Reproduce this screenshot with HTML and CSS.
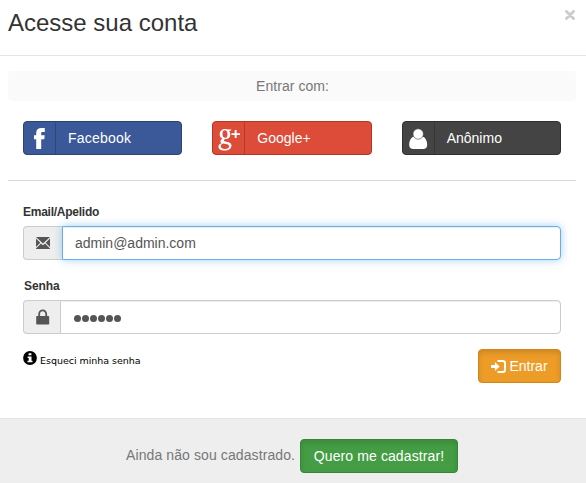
FILE: index.html
```
<!DOCTYPE html>
<html lang="pt-BR">
<head>
<meta charset="utf-8">
<title>Acesse sua conta</title>
<link rel="stylesheet" href="styles.css">
</head>
<body>
<main class="modal">
  <header class="modal-header">
    <h1>Acesse sua conta</h1>
    <button class="close" aria-label="Fechar"><svg width="10" height="10" viewBox="0 0 10 10"><path d="M1.500 1.500l7 7M8.500 1.500l-7 7" stroke="#ccc" stroke-width="2.900" stroke-linecap="round"/></svg></button>
  </header>
  <section class="modal-body">
    <p class="hint">Entrar com:</p>
    <div class="social">
      <button class="social-btn facebook">
        <span class="social-icon"><svg width="32" height="32" viewBox="0 0 32 32"><path fill="#fff" d="M20.800 6.100v4h-2.100c-1.200 0-1.500.5-1.500 1.400v1.700h3.500l-.4 4h-3.100V27h-5V17.200H10v-4h2.200v-2.400c0-3.100 2-4.800 5.200-4.800 1.400 0 2.900 0 3.400.1z"/></svg></span>
        <span class="social-text">Facebook</span>
      </button>
      <button class="social-btn google">
        <span class="social-icon"><svg width="32" height="32" viewBox="0 0 32 32"><path fill="#fff" fill-rule="evenodd" d="M12 7c1.300 0 2.100.3 3 .5h3.500L17.200 9h-1.400c1 .9 1.500 2 1.500 3.400 0 2.800-2.100 4.700-5.200 4.700-.8.500-1.200.9-1.200 1.400 0 .8.900 1 2.500 1.200 3.200.4 5.100 1.400 5.100 3.800 0 3-2.900 5-6.900 5-3.900 0-6.200-1.400-6.200-3.800 0-1.700 1.200-2.900 3.300-3.500-.9-.4-1.300-1-1.300-1.700 0-1 .8-1.900 2.100-2.700-1.800-.7-2.800-2.200-2.800-4.200C6.700 9.300 8.700 7 12 7zm-.3 1.300c-1.400 0-2.200 1.200-2.200 3.400 0 2.700 1 4.100 2.700 4.100 1.500 0 2.300-1.200 2.300-3.400 0-2.700-1-4.100-2.800-4.100zM10.200 21.600c-1.600.5-2.400 1.400-2.400 2.700 0 1.600 1.400 2.600 4.200 2.600 2.500 0 4-1 4-2.500 0-1.700-1.500-2.300-5.800-2.800z"/><path fill="#fff" d="M21.700 8h1.900v3.200H27v1.700h-3.400V16h-1.900v-3.100h-3.200v-1.700h3.200z"/></svg></span>
        <span class="social-text">Google+</span>
      </button>
      <button class="social-btn anonymous">
        <span class="social-icon"><svg width="32" height="32" viewBox="0 0 32 32" fill="#fff"><path d="M11 14.500c-3.100.8-4.800 4.200-4.800 8.500 0 2.600 1.600 4 4 4h10c2.400 0 4-1.400 4-4 0-4.300-1.700-7.700-4.800-8.500-1.100 1.600-2.500 2.300-4.200 2.300s-3.100-.7-4.200-2.300z"/><circle cx="15.200" cy="12" r="5.200" stroke="#444" stroke-width=".6"/></svg></span>
        <span class="social-text">Anônimo</span>
      </button>
    </div>
    <form class="login">
      <label for="email">Email/Apelido</label>
      <div class="input-group">
        <span class="addon mail"><svg width="14" height="12" viewBox="0 0 14 12" fill="#555"><path d="M0 0h14L7 6.500zM0 1.500L4.300 5.700 0 10zM14 1.500v8.500L9.700 5.700zM0 12v-.6l5-5 2 1.800 2-1.800 5 5v.6z"/></svg></span>
        <input id="email" class="focused" type="text" value="admin@admin.com">
      </div>
      <label for="senha" class="password-label">Senha</label>
      <div class="input-group">
        <span class="addon"><svg width="14" height="16" viewBox="0 0 14 16"><path d="M3.200 8V5a3.500 3.700 0 0 1 7 0v3" fill="none" stroke="#555" stroke-width="1.800"/><rect x=".2" y="7" width="13" height="8.500" rx=".8" fill="#555"/></svg></span>
        <div class="password" id="senha" role="textbox"><i></i><i></i><i></i><i></i><i></i><i></i></div>
      </div>
      <div class="actions">
        <a class="forgot"><svg width="14" height="14" viewBox="0 0 14 14"><circle cx="7" cy="7" r="6.900"/><path fill="#fff" d="M5.600 2.300h2.800v2H5.600zM4.600 5.500h3.900v4.300h1v1.400h-5V9.800h1.200V6.900H4.600z"/></svg><span>Esqueci minha senha</span></a>
        <button type="button" class="btn enter"><svg width="15" height="13" viewBox="0 0 15 13"><path fill="#fff" d="M0 5h3.900V2l4.700 4.500L3.900 11V8H0z"/><path fill="none" stroke="#fff" stroke-width="2" d="M6.500 1h5.300c1.300 0 2.200.8 2.200 2.200v6.600c0 1.400-.9 2.200-2.200 2.200H6.500"/></svg><span>Entrar</span></button>
      </div>
    </form>
  </section>
  <footer class="modal-footer">
    <span>Ainda não sou cadastrado.</span>
    <button class="btn signup">Quero me cadastrar!</button>
  </footer>
</main>
</body>
</html>
```
FILE: styles.css
```
* { box-sizing: border-box; }
body { margin: 0; background: #fff; color: #333; font: 14px/20px "Liberation Sans", Arial, sans-serif; overflow: hidden; }
button, input { font: inherit; }
button { margin: 0; padding: 0; border: 0; }
svg { display: block; flex: none; }
.modal { height: 483px; display: flex; flex-direction: column; }
.modal-header { height: 56px; flex: none; display: flex; justify-content: space-between; align-items: flex-start; padding: 9px 11px 0 8px; border-bottom: 1px solid #e5e5e5; }
h1 { margin: 0; font-size: 24px; line-height: 27px; font-weight: normal; }
.close { background: none; margin-top: 1px; }
.modal-body { height: 362px; flex: none; padding: 15px 10px 0 8px; }
.hint { margin: 0; height: 30px; line-height: 30px; border-radius: 4px; background: #fafafa; color: #777; text-align: center; letter-spacing: .04px; padding-left: 1px; }
.social { display: grid; grid-template-columns: repeat(3, 1fr); gap: 30px; padding: 20px 15px 25px; border-bottom: 1px solid #d9d9d9; }
.social-btn { display: flex; height: 34px; border: 1px solid; border-radius: 4px; overflow: hidden; color: #fff; text-align: left; }
.social-icon { width: 32px; height: 32px; border-right: 1px solid rgba(0,0,0,.2); }
.social-text { line-height: 32px; padding-left: 12px; }
.facebook { background: #3b5998; border-color: #2d4373; letter-spacing: .22px; }
.google { background: #dd4b39; border-color: #b63626; }
.anonymous { background: #444; border-color: #303030; }
.login { padding: 22px 15px 0; }
label { display: block; height: 18px; font-size: 12px; line-height: 18px; font-weight: bold; letter-spacing: -.25px; margin-bottom: 5px; }
.password-label { margin-top: 17px; padding-left: 1px; letter-spacing: -.1px; }
.input-group { display: flex; height: 34px; }
.addon { width: 38px; margin-right: -1px; display: flex; align-items: center; justify-content: center; border: 1px solid #ccc; border-right: 0; border-radius: 4px 0 0 4px; background: #eee; }
.mail { width: 39px; margin-right: 0; }
input, .password { flex: 1; min-width: 0; border: 1px solid #ccc; border-radius: 0 4px 4px 0; background: #fff; color: #555; padding: 0 12px; box-shadow: inset 0 1px 1px rgba(0,0,0,.075); }
.focused { outline: 0; border-color: #66afe9; box-shadow: inset 0 1px 1px rgba(0,0,0,.075), 0 0 8px rgba(102,175,233,.6); }
.password { display: flex; align-items: center; gap: 1px; padding-top: 3px; padding-left: 13px; }
.password i { width: 7px; height: 7px; border-radius: 50%; background: #555; }
.actions { display: flex; justify-content: space-between; margin-top: 15px; }
.forgot { display: flex; height: 21px; gap: 3px; color: #000; font: 9.500px/14px "DejaVu Sans", sans-serif; padding-top: 2px; letter-spacing: -.03px; }
.forgot span { margin-top: 3px; }
.btn { display: flex; align-items: center; justify-content: center; height: 34px; border: 1px solid; border-radius: 4px; color: #fff; box-shadow: inset 0 3px 5px rgba(0,0,0,.125); }
.enter { width: 83px; gap: 3px; background: #ed9c28; border-color: #d58512; }
.modal-footer { flex: 1; display: flex; align-items: flex-start; justify-content: center; gap: 4px; padding: 20px 2px 0 0; border-top: 1px solid #e5e5e5; background: #eee; color: #777; }
.modal-footer > span { width: 170px; line-height: 33px; letter-spacing: .1px; white-space: nowrap; }
.signup { width: 158px; letter-spacing: .1px; background: #449d44; border-color: #398439; }
```
